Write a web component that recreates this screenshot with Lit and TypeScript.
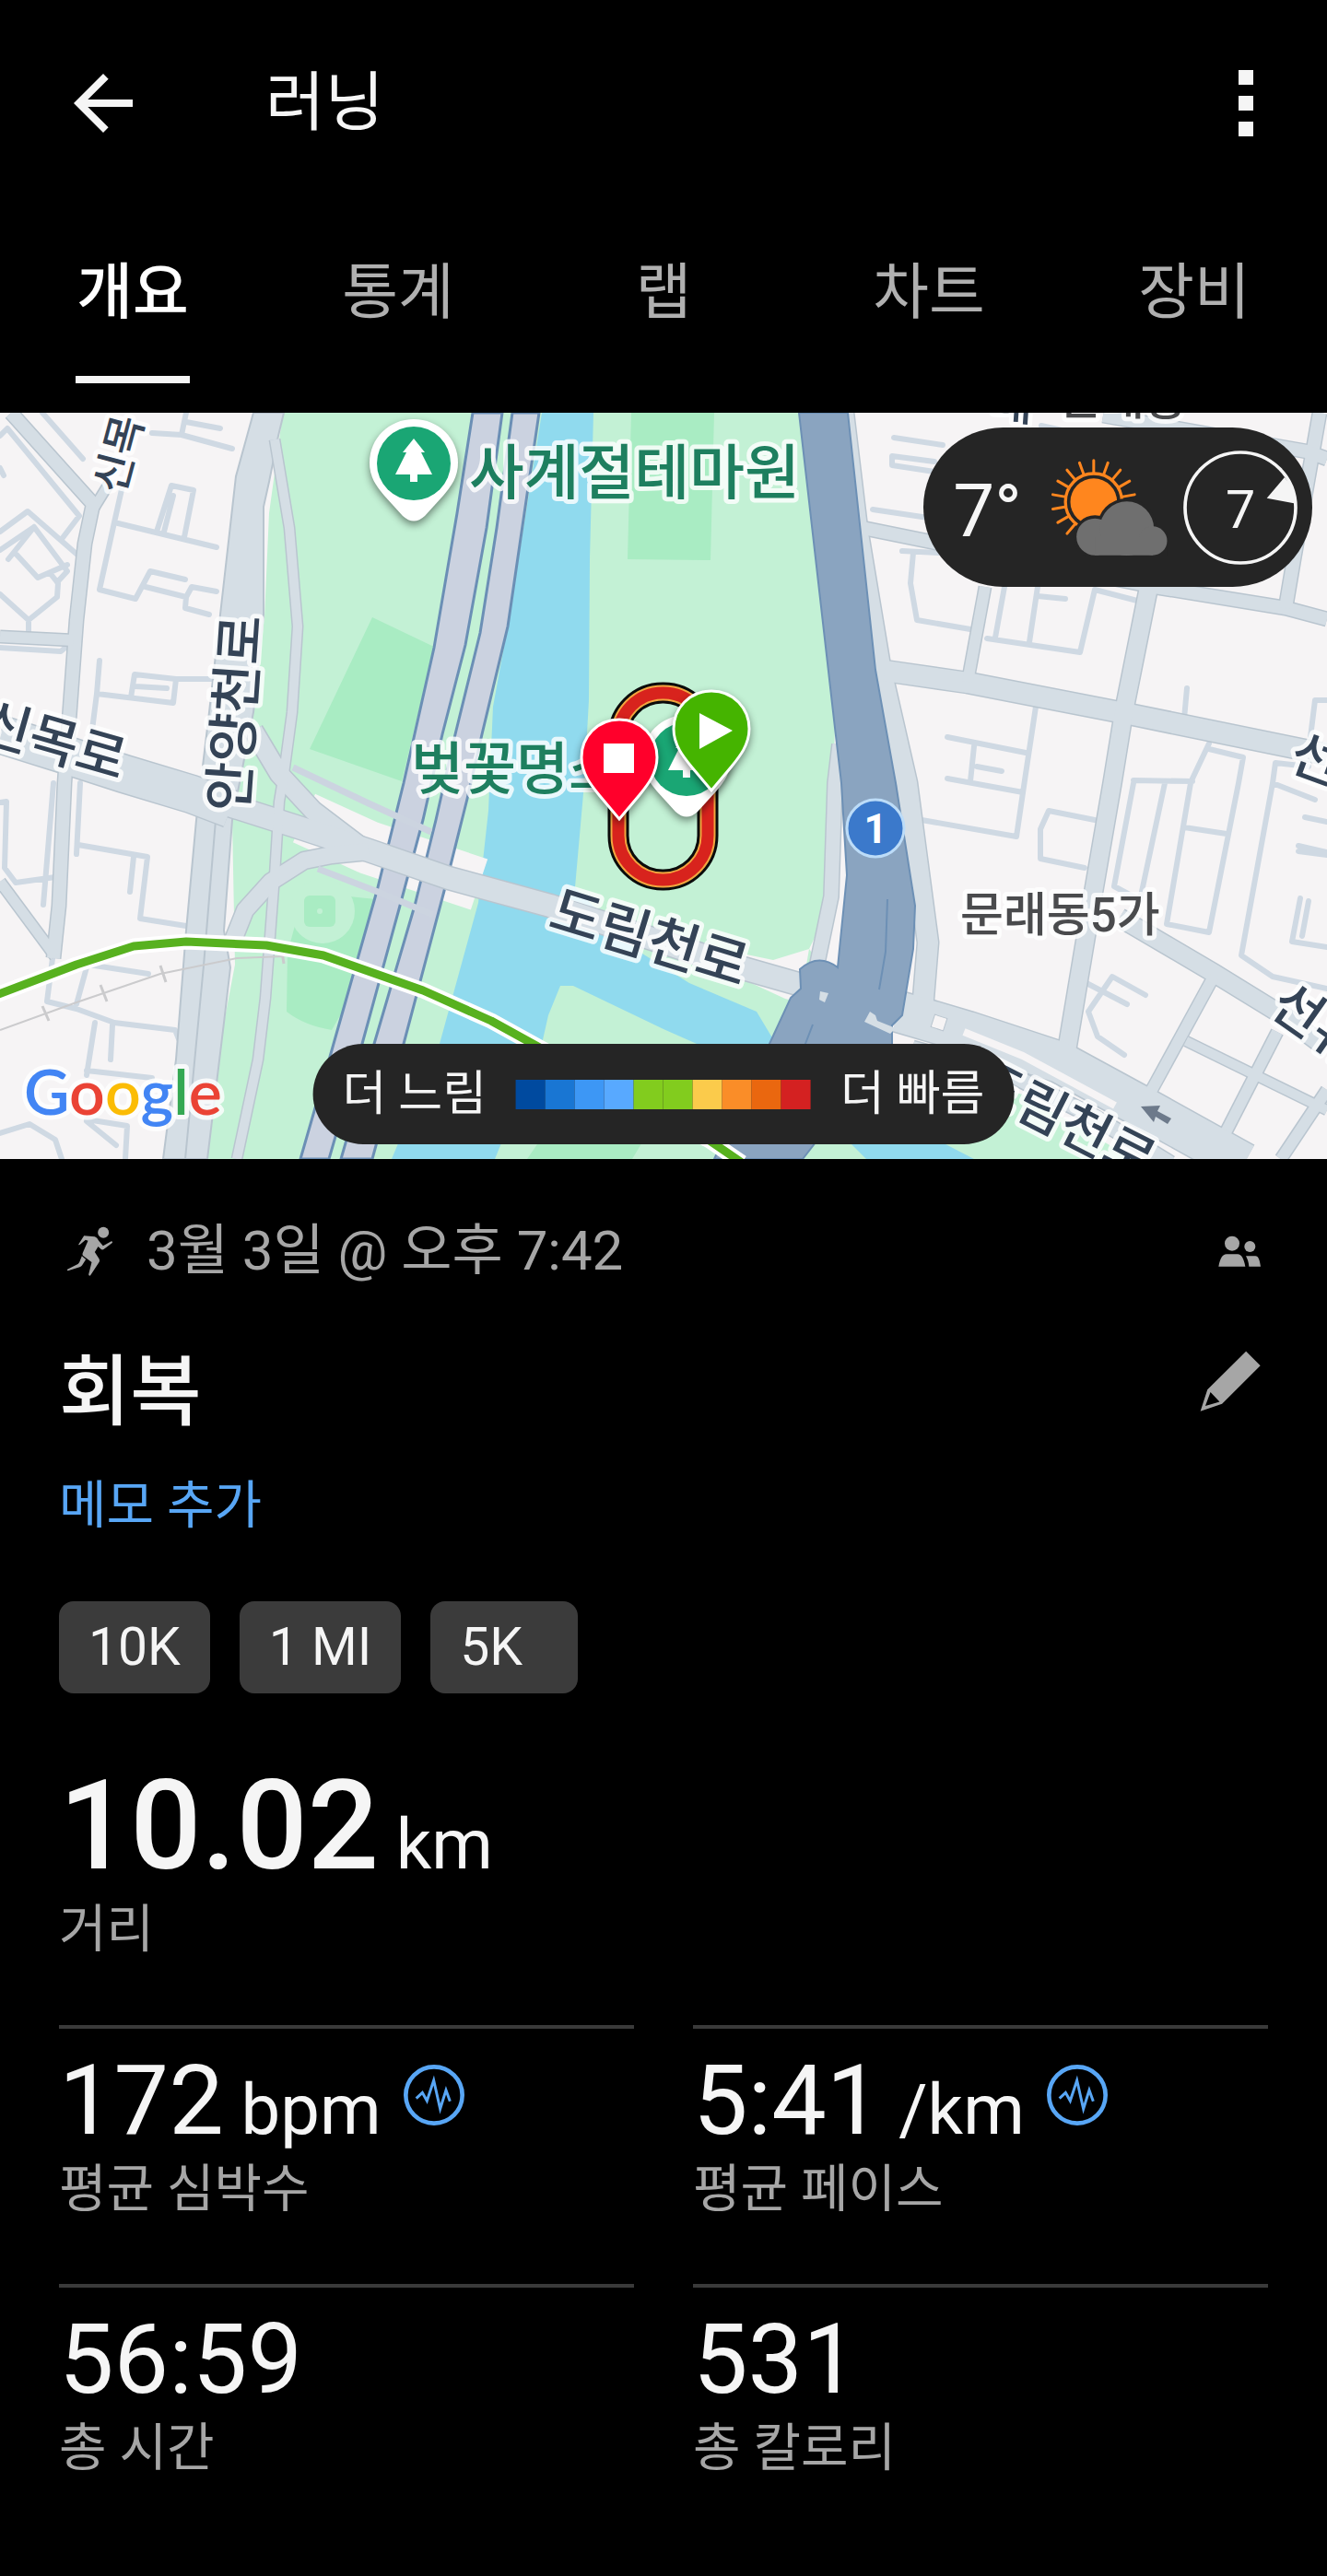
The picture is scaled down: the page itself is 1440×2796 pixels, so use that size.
import { LitElement, css, html, svg } from 'lit'
import { customElement, property, state } from 'lit/decorators.js'
import { classMap } from 'lit/directives/class-map.js'

const TABS = ['개요', '통계', '랩', '차트', '장비']

const BADGES = ['10K', '1 MI', '5K']

const METRICS = [
  { value: '172', unit: 'bpm', label: '평균 심박수', pulse: true },
  { value: '5:41', unit: '/km', label: '평균 페이스', pulse: true },
  { value: '56:59', unit: '', label: '총 시간', pulse: false },
  { value: '531', unit: '', label: '총 칼로리', pulse: false },
]

const PACE_COLORS = [
  '#004a9f', '#1976d3', '#3d97f5', '#58a9ff', '#82cc1e',
  '#82cc1e', '#fbcb4b', '#fa8d28', '#ea670f', '#d42121',
]

// one path for all the alleys, they share a single stroke
const ALLEYS = `
  M46 0L90 50 M202 0L197 24L252 39 M165 22L197 24 M202 10L239 17
  M133 79L124 119L108 192L147 202L163 172L201 181 M124 119L235 146
  M170 129L186 79L210 84L200 135 M178 129L188 90
  M158 189L202 200L208 189L235 194 M202 200L201 212L227 219
  M108 269L105 305L99 352 M105 305L188 315L191 289
  M142 309L146 284L191 289L232 289 M147 297L181 299
  M0 25L8 17L86 112L67 137 M0 129L30 107L85 155 M0 149L37 124L73 172L62 184
  M37 124L9 159 M18 154L41 179L73 165 M0 60L4 68
  M0 197L31 225L62 200L63 185L55 175 M31 225L31 237 M0 255L66 259L72 254
  M0 423L7 422L5 494L17 510L60 504 M58 402L47 534 M87 402L83 479
  M85 469L160 482L152 549L202 557 M145 482L141 520
  M57 592L51 639L83 647L124 662L190 670L194 680 M94 602L83 642 M96 599L161 609
  M103 662L94 719 M122 665L120 702 M94 714L165 722
  M0 782L32 772L60 789L67 810 M94 767L138 774L136 810 M94 769L126 795
  M970 27L1023 35 M1014 53L968 47L968 57L1014 64 M947 105L1014 115
  M979 150L1018 152 M991 152L988 185L995 225L1053 235
  M1090 189L1080 244 M1126 189L1117 249 M1188 192L1172 260L1071 245
  M1126 199L1156 202 M1188 192L1234 204
  M1124 319L1113 392L1103 460L1000 442 M1028 352L1113 369 M1028 397L1110 412
  M1057 362L1053 400 M1060 384L1087 389 M1288 299L1285 332
  M1312 359L1294 397 M1312 365L1349 374L1344 402L1312 564L1266 555L1292 402
  M1230 399L1294 400 M1230 402L1209 514L1237 529L1264 402 M1285 450L1331 457
  M1427 420L1381 402L1347 589L1381 612L1440 625 M1381 402L1384 380L1420 384
  M1188 442L1138 432L1129 452L1129 484L1177 494
  M1416 439L1440 444 M1409 470L1440 477 M1409 476L1440 480
  M1411 527L1402 574L1440 580 M1420 530L1413 568
  M1179 619L1223 642 M1243 632L1207 612L1181 650L1191 677L1220 697
  M1440 312L1427 312L1422 352 M1130 14L1210 32
`

const ROADS = [
  { width: 14, d: 'M12 0L101 99L92 142L83 225L74 347L70 402L64 535L58 592' },
  { width: 10, d: 'M120 74L101 105' },
  { width: 12, d: 'M0 243L80 247' },
  { width: 11, d: 'M0 509L60 590' },
  { width: 40, d: 'M0 349L70 371L135 392L208 414L250 430' },
  { width: 20, d: 'M275 345L303 392L340 432L390 470' },
  { width: 24, d: 'M230 420L321 449L400 475L487 505L597 535L803 602L880 624' },
  { width: 18, d: 'M400 476L360 480L330 486L294 509L266 540L250 580' },
  { width: 10, d: 'M298 29L314 125L323 232L317 325L308 392L303 422L298 502L288 635L280 702L257 810' },
  { width: 15, d: 'M911 360L906 402L902 525L886 602' },
  { width: 22, d: 'M915 0L930 125L955 275L984 402L1007 575L1000 660' },
  { width: 14, d: 'M936 125L1005 139L1253 189L1395 212L1440 224' },
  { width: 22, d: 'M960 280L1050 293L1225 327L1440 371' },
  { width: 12, d: 'M1069 189L1050 292' },
  { width: 14, d: 'M1432 0L1404 159L1395 212' },
  { width: 14, d: 'M1197 3L1418 42L1440 50' },
  { width: 19, d: 'M1246 192L1220 322L1207 402L1184 535L1158 690' },
  { width: 19, d: 'M1215 548L1317 608L1395 656L1440 690' },
  { width: 12, d: 'M1317 612L1246 742' },
  { width: 10, d: 'M1287 682L1440 757' },
  { width: 12, d: 'M1386 672L1326 789' },
  { width: 12, d: 'M1440 735L1390 810' },
  { width: 44, d: 'M975 650L1050 672L1150 705L1240 754L1350 815' },
  { width: 16, d: 'M990 690L1100 720L1190 766L1270 815' },
]

const EXPRESSWAYS = [
  'M513 0L496 109L471 255L438 402L409 519L360 692L326 810H357L393 685L434 535L459 442L480 349L505 252L528 125L545 0Z',
  'M556 0L539 125L521 239L494 349L473 442L450 535L406 685L370 810H404L438 685L482 519L507 419L523 349L551 232L569 109L585 0Z',
]

const TRAILS = 'M318 385L400 424L468 455 M345 495L410 520L470 545'

const RIVER = 'M588 0H644L640 159L639 312L634 402L624 515L689 582L748 619L821 650L845 690L790 700L720 669L622 622H608L595 654L588 685L537 810H425L477 685L519 532L530 432L535 319L551 232Z'

const HIGHWAY = 'M867 0L906 342L913 402L919 502L909 602Q888 586 868 604L869 625L858 635L835 685L775 810H871L968 685V665L979 654L991 582L993 535L972 402L950 279L920 0Z'

const SUBWAY = 'M-4 632L83 599L145 579L202 574L289 578L351 589L459 627L533 660L600 697L770 790L805 814'

const MAP_LABELS = [
  { text: '신목', x: 134, y: 90, angle: -75, size: 46, kind: 'road' },
  { text: '안양천로', x: 268, y: 434, angle: -86, size: 58, kind: 'road' },
  { text: '신목로', x: -24, y: 354, angle: 16, size: 58, kind: 'road' },
  { text: '도림천로', x: 593, y: 558, angle: 17, size: 60, kind: 'road' },
  { text: '도림천로', x: 1050, y: 737, angle: 27, size: 58, kind: 'road' },
  { text: '선유로', x: 1375, y: 650, angle: 35, size: 58, kind: 'road' },
  { text: '선유로', x: 1396, y: 386, angle: 20, size: 58, kind: 'road' },
  { text: '대', x: 1074, y: 6, angle: 4, size: 50, kind: 'road' },
  { text: '문래동', x: 1150, y: 2, angle: 0, size: 50, kind: 'district' },
  { text: '사계절테마원', x: 509, y: 88, angle: 0, size: 65, kind: 'park' },
  { text: '벚꽃명소', x: 446, y: 409, angle: 0, size: 62, kind: 'park' },
  { text: '문래동5가', x: 1042, y: 563, angle: 0, size: 51, kind: 'district' },
]

const GOOGLE = [
  ['G', '#4285f4'],
  ['o', '#ea4335'],
  ['o', '#fbbc05'],
  ['g', '#4285f4'],
  ['l', '#34a853'],
  ['e', '#ea4335'],
]

const SUN_RAYS = Array.from({ length: 12 }, (_, i) => 10 + i * 20)

@customElement('run-map')
export class RunMap extends LitElement {
  static styles = css`
    :host {
      display: block;
      overflow: hidden;
      background: #f6f4f5;
    }

    svg {
      display: block;
      width: 100%;
    }

    .line {
      fill: none;
      stroke-linejoin: round;
    }

    .alley {
      stroke: #cfd9e3;
      stroke-width: 6;
      stroke-linecap: round;
    }

    .casing {
      stroke: #b9c5cf;
    }

    .road {
      stroke: #d5dee5;
    }

    text {
      font-family: Roboto, 'Noto Sans CJK KR', sans-serif;
      font-weight: 500;
      paint-order: stroke;
      stroke: #fff;
      stroke-opacity: 0.8;
      stroke-width: 10;
      stroke-linejoin: round;
    }

    .label-road {
      fill: #344356;
    }

    .label-park {
      fill: #1e7f5f;
    }

    .label-district {
      fill: #4a4b4d;
    }

    .shield {
      fill: #fff;
      stroke: none;
      font-weight: 700;
      font-size: 44px;
      text-anchor: middle;
    }

    .google {
      font-family: Lato, sans-serif;
      font-weight: 600;
      font-size: 68px;
    }

    .pin {
      filter: drop-shadow(0 4px 4px rgb(0 0 0 / 45%));
    }
  `

  treePin(x: number, y: number) {
    return svg`
      <g class="pin" transform="translate(${x} ${y})">
        <path fill="#fff" d="M0-48C27-48 48-27 48-1C48 15 41 24 32 35L12 57Q0 68-12 57L-32 35C-41 24-48 15-48-1C-48-27-27-48 0-48Z" />
        <circle r="40" fill="#1aa674" />
        <path fill="#fff" d="M0-27L12-12H8L20 12H4V20H-4V12H-20L-8-12H-12Z" />
      </g>
    `
  }

  marker(x: number, y: number, color: string, glyph: string) {
    return svg`
      <g class="pin" transform="translate(${x} ${y})">
        <path fill=${color} stroke="#fff" stroke-width="3" d="M0-41C24-41 41-22 41 0C41 18 30 31 21 42L0 67L-21 42C-30 31-41 18-41 0C-41-22-24-41 0-41Z" />
        <path fill="#fff" d=${glyph} />
      </g>
    `
  }

  render() {
    return html`
      <svg viewBox="0 0 1440 810" role="img" aria-label="러닝 경로">
        <path fill="#c3f1d5" d="M307 0L292 109L287 222L275 325L252 442L255 599L243 662L225 810H870L960 690L878 582L904 529V402L906 342L867 0Z" />
        <path fill="#c3f1d5" d="M850 810L900 720L1030 720L1110 740L1230 810Z" />
        <path fill="#a9ecc3" d="M404 222L471 254L436 400L336 365Z M685 0H775L771 160L681 159Z M312 586L330 520L408 528L400 600L360 670Q330 665 311 650Z M583 794L698 790L686 810H572Z" />
        <circle cx="350" cy="541" r="35" fill="#c3f1d5" />
        <rect x="330" y="524" width="34" height="34" rx="6" fill="#a9ecc3" />
        <circle cx="347" cy="541" r="3" fill="#c3f1d5" />
        <path fill="#90daee" d=${RIVER} />
        <path fill="#90daee" d="M900 770H980L1057 810H940Z" />
        <path class="line" stroke="#f6f4f5" stroke-width="58" d="M330 440L400 472L520 512" />
        <path fill="#f6f4f5" d="M810 588L839 594L878 582L868 640L852 636L800 612Z" />

        <path class="line alley" d=${ALLEYS} />
        <path fill="#d5dee5" stroke="#b9c5cf" stroke-width="2" d="M275 0L256 69L239 219L227 325L213 442L202 562L191 702L177 810H225L243 662L250 602L243 562L252 442L275 325L286 219V102L292 75L302 25L308 0Z" />
        <path class="line casing" stroke-width="2" d="M235 430L221 600L201 810" />
        ${EXPRESSWAYS.map((d) => svg`<path fill="#cbd2e0" stroke="#6b8fb5" stroke-width="3" d=${d} />`)}
        ${ROADS.map(({ width, d }) => svg`<path class="line casing" stroke-width=${width + 3} d=${d} />`)}
        ${ROADS.map(({ width, d }) => svg`<path class="line road" stroke-width=${width} d=${d} />`)}
        <path class="line" stroke="#ccd4e0" stroke-width="7" d=${TRAILS} />
        <path class="line" stroke="#f6f4f5" stroke-width="8" d="M1046 672L1110 698L1210 752" />
        <rect x="1012" y="655" width="14" height="14" fill="#f6f4f5" stroke="#b9c5cf" transform="rotate(18 1019 662)" />

        <path fill="#8aa4c0" stroke="#6d90b5" stroke-width="2" d=${HIGHWAY} />
        <path class="line" stroke="#6d90b5" stroke-width="2" d="M963 528L961 585L954 626 M882 664L872 690" />
        <path fill="#d5dee5" d="M890 628L899 630L895 640L889 637Z M944 650L950 654L952 660L972 668L966 674L938 661Z" />

        <path class="line" stroke="#cbcbcd" stroke-width="2" d="M0 670L83 640L174 609L257 592L308 590" />
        <path class="line" stroke="#cbcbcd" stroke-width="3" d="M46 644L53 660 M109 621L116 639 M174 600L180 618 M306 585L308 598" />
        <path class="line" stroke="#fff" stroke-width="17" d=${SUBWAY} />
        <path class="line" stroke="#57b11f" stroke-width="9" d=${SUBWAY} />

        <path fill="#6d7a8b" d="M1238 753L1259 752L1256 758L1271 766L1267 772L1254 764L1252 770Z" />

        ${MAP_LABELS.map(
          ({ text, x, y, angle, size, kind }) => svg`
            <text class="label-${kind}" font-size=${size} transform="translate(${x} ${y}) rotate(${angle})">${text}</text>
          `
        )}

        <circle cx="950" cy="451" r="31" fill="#3b79cb" stroke="#bcdcf8" stroke-width="3" />
        <text class="shield" x="950" y="467">1</text>

        <text class="google" x="26" y="762">${GOOGLE.map(
          ([letter, color]) => svg`<tspan fill=${color}>${letter}</tspan>`
        )}</text>

        <g class="line">
          <rect x="671" y="304" width="97" height="203" rx="48" stroke="#0b0b0b" stroke-width="23" />
          <rect x="671" y="304" width="97" height="203" rx="48" stroke="#f2a63f" stroke-width="17" />
          <rect x="671" y="304" width="97" height="203" rx="48" stroke="#d8231d" stroke-width="13" />
        </g>

        ${this.treePin(449, 55)}
        ${this.treePin(745, 376)}
        ${this.marker(672, 374, '#ff002b', 'M-17-15H16V17H-17Z')}
        ${this.marker(772, 343, '#45b400', 'M-13-17L23 2L-13 22Z')}
      </svg>
    `
  }
}

@customElement('weather-pill')
export class WeatherPill extends LitElement {
  static styles = css`
    :host {
      display: flex;
      align-items: center;
      box-sizing: border-box;
      height: 173px;
      padding: 0 16px 0 32px;
      border-radius: 87px;
      background: #252525;
      color: #f5f5f5;
    }

    .temperature {
      padding-top: 8px;
      font-size: 80px;
      line-height: 96px;
      margin-right: 32px;
    }

    .sky {
      width: 127px;
      height: 106px;
      margin-right: 16px;
    }

    .wind {
      width: 124px;
      height: 124px;
    }

    text {
      font-size: 172px;
      text-anchor: middle;
    }
  `

  render() {
    return html`
      <span class="temperature">7°</span>
      <svg class="sky" viewBox="483 145 380 318" aria-hidden="true">
        <g fill="none" stroke="#ff861e" stroke-linecap="round">
          ${SUN_RAYS.map(
            (angle) => svg`<path stroke-width="9" d="M716 285H755" transform="rotate(${-angle} 620 285)" />`
          )}
          <circle cx="620" cy="285" r="92" stroke-width="10" />
        </g>
        <circle cx="620" cy="285" r="76" fill="#ff861e" />
        <g fill="#252525">
          <circle cx="624" cy="399" r="70" />
          <circle cx="728" cy="372" r="98" />
          <path d="M624 380H860V463H624Z" />
        </g>
        <g fill="#6f6f6f">
          <circle cx="624" cy="399" r="60" />
          <circle cx="728" cy="372" r="88" />
          <circle cx="812" cy="412" r="47" />
          <path d="M624 400H812V459H624Z" />
        </g>
      </svg>
      <svg class="wind" viewBox="912 117 372 372" aria-label="풍속 7">
        <circle cx="1098" cy="303" r="180" fill="none" stroke="#f5f5f5" stroke-width="11" />
        <path fill="#f5f5f5" d="M1184 272L1242 204Q1274 240 1280 290Z" />
        <text x="1098" y="370" fill="#f5f5f5">7</text>
      </svg>
    `
  }
}

@customElement('metric-tile')
export class MetricTile extends LitElement {
  static styles = css`
    :host {
      display: block;
      border-top: 4px solid #3a3a3a;
      padding-top: 18px;
    }

    .reading {
      display: flex;
      align-items: center;
      gap: 24px;
      height: 120px;
      font-size: 106px;
      line-height: 120px;
      color: #f5f5f5;
      white-space: nowrap;
    }

    .unit {
      font-size: 76px;
      line-height: 76px;
      white-space: pre;
    }

    svg {
      width: 66px;
      height: 66px;
      margin-bottom: 12px;
    }

    .label {
      margin-top: 4px;
      font-size: 56px;
      line-height: 64px;
      color: #a6a6a6;
    }
  `

  @property() value = ''
  @property() unit = ''
  @property() label = ''
  @property({ type: Boolean }) pulse = false

  render() {
    return html`
      <div class="reading">
        <span>${this.value}<span class="unit"> ${this.unit}</span></span>
        ${this.pulse
          ? html`
              <svg viewBox="54 62 198 198" fill="none" stroke="#58a6f5" aria-hidden="true">
                <circle cx="153" cy="161" r="92" stroke-width="14" />
                <path stroke-width="9" d="M95 172L115 153L130 180L152 113L173 206L192 145L205 181" />
              </svg>
            `
          : ''}
      </div>
      <div class="label">${this.label}</div>
    `
  }
}

@customElement('app-root')
export class AppRoot extends LitElement {
  static styles = css`
    :host {
      display: block;
      min-height: 100vh;
      background: #000;
      color: #f5f5f5;
      font-family: Roboto, 'Noto Sans CJK KR', sans-serif;
    }

    h1,
    h2 {
      margin: 0;
      font-weight: 500;
    }

    button {
      display: flex;
      align-items: center;
      padding: 0;
      border: 0;
      background: none;
      color: inherit;
      font: inherit;
      cursor: pointer;
    }

    .bar {
      display: flex;
      align-items: center;
      height: 224px;
      padding: 0 64px;
      gap: 128px;
    }

    .bar h1 {
      flex: 1;
      font-size: 70px;
      font-weight: 400;
      line-height: 80px;
    }

    .bar svg {
      width: 96px;
      height: 96px;
    }

    .bar .more svg {
      width: 48px;
    }

    .tabs {
      display: grid;
      grid-template-columns: repeat(5, 1fr);
      height: 224px;
    }

    .tab {
      justify-content: center;
      align-items: flex-start;
      font-size: 66px;
      color: #b0b0b0;
    }

    .tab span {
      min-width: 124px;
      padding-top: 4px;
      line-height: 180px;
      border-bottom: 8px solid transparent;
    }

    .tab.active {
      color: #fff;
      font-weight: 500;
    }

    .tab.active span {
      border-color: #f5f5f5;
    }

    .map {
      position: relative;
    }

    weather-pill {
      position: absolute;
      top: 16px;
      right: 16px;
    }

    .legend {
      position: absolute;
      bottom: 16px;
      left: 50%;
      transform: translateX(-50%);
      display: flex;
      align-items: center;
      gap: 32px;
      height: 109px;
      padding: 0 32px;
      border-radius: 55px;
      background: #252525;
      font-size: 52px;
      line-height: 64px;
      white-space: nowrap;
    }

    .scale {
      display: flex;
    }

    .scale i {
      width: 32px;
      height: 32px;
    }

    .details {
      padding: 60px 64px 96px;
    }

    .meta {
      display: flex;
      align-items: center;
      gap: 36px;
      height: 80px;
      padding: 0 8px;
      font-size: 60px;
      line-height: 80px;
      color: #a6a6a6;
      fill: currentColor;
    }

    .meta time {
      flex: 1;
    }

    .runner {
      width: 51px;
      height: 54px;
    }

    .people {
      width: 46px;
      height: 34px;
    }

    .name {
      display: flex;
      justify-content: space-between;
      align-items: flex-start;
      margin-top: 64px;
      padding-right: 8px;
    }

    .name h2 {
      font-size: 84px;
      line-height: 100px;
    }

    .name button {
      padding-top: 4px;
    }

    .name svg {
      width: 66px;
      height: 66px;
      fill: #a6a6a6;
    }

    .memo {
      margin-top: 40px;
      font-size: 56px;
      line-height: 64px;
      color: #58a6f5;
    }

    .badges {
      display: flex;
      gap: 32px;
      margin: 72px 0 0;
      padding: 0;
      list-style: none;
    }

    .badges li {
      box-sizing: border-box;
      min-width: 160px;
      padding: 0 32px;
      border-radius: 16px;
      background: #3b3b3b;
      font-size: 57px;
      line-height: 100px;
    }

    .distance {
      margin-top: 64px;
      font-size: 136px;
      font-weight: 500;
      line-height: 160px;
    }

    .distance span {
      font-size: 76px;
      font-weight: 400;
      line-height: 76px;
      white-space: pre;
    }

    .label {
      font-size: 56px;
      line-height: 64px;
      color: #a6a6a6;
    }

    .metrics {
      display: grid;
      grid-template-columns: 1fr 1fr;
      gap: 71px 64px;
      margin-top: 72px;
    }
  `

  @state() activeTab = 0

  render() {
    return html`
      <header class="bar">
        <button aria-label="뒤로">
          <svg viewBox="0 0 24 24" fill="#f5f5f5">
            <path d="M20 11H7.83l5.59-5.59L12 4l-8 8 8 8 1.41-1.41L7.83 13H20v-2z" />
          </svg>
        </button>
        <h1>러닝</h1>
        <button class="more" aria-label="더보기">
          <svg viewBox="0 0 48 96" fill="#f5f5f5">
            <path d="M16 12h16v16H16z M16 40h16v16H16z M16 68h16v16H16z" />
          </svg>
        </button>
      </header>

      <nav class="tabs" role="tablist">
        ${TABS.map(
          (tab, i) => html`
            <button
              role="tab"
              aria-selected=${i === this.activeTab}
              class=${classMap({ tab: true, active: i === this.activeTab })}
              @click=${() => (this.activeTab = i)}
            >
              <span>${tab}</span>
            </button>
          `
        )}
      </nav>

      <section class="map">
        <run-map></run-map>
        <weather-pill></weather-pill>
        <div class="legend">
          <span>더 느림</span>
          <div class="scale">${PACE_COLORS.map((color) => html`<i style="background:${color}"></i>`)}</div>
          <span>더 빠름</span>
        </div>
      </section>

      <main class="details">
        <div class="meta">
          <svg class="runner" viewBox="36 64 152 162" aria-hidden="true">
            <circle cx="156" cy="84" r="18" />
            <path d="M75 123L93 95L128 98Q136 101 141 111L155 128L182 113Q187 113 185 118L157 139Q152 142 148 138L139 130L128 148L142 170Q145 176 142 181L114 224Q109 227 108 221L118 181L90 160Q86 156 90 148L106 111L98 108L82 122Q76 127 75 123Z" />
            <path d="M86 161L99 172L87 191Q84 196 79 197L41 209Q36 208 39 204L73 187Q77 184 79 179Z" />
          </svg>
          <time>3월 3일 @ 오후 7:42</time>
          <svg class="people" viewBox="303 127 138 102" aria-hidden="true">
            <circle cx="348" cy="153" r="24" />
            <circle cx="406" cy="163" r="18" />
            <path d="M304 228C309 203 316 188 330 188H366C379 188 386 203 391 228Z M393 194H424C434 194 438 208 441 228H403C402 214 398 203 393 194Z" />
          </svg>
        </div>

        <div class="name">
          <h2>회복</h2>
          <button aria-label="이름 편집">
            <svg viewBox="248 496 200 200">
              <path fill-rule="evenodd" d="M400 498L447 545L321 671L250 695L273 624Z M283 632L266 678L313 664Z" />
            </svg>
          </button>
        </div>

        <button class="memo">메모 추가</button>

        <ul class="badges">
          ${BADGES.map((badge) => html`<li>${badge}</li>`)}
        </ul>

        <div class="distance">10.02<span> km</span></div>
        <div class="label">거리</div>

        <div class="metrics">
          ${METRICS.map(
            (m) => html`
              <metric-tile .value=${m.value} .unit=${m.unit} .label=${m.label} ?pulse=${m.pulse}></metric-tile>
            `
          )}
        </div>
      </main>
    `
  }
}
